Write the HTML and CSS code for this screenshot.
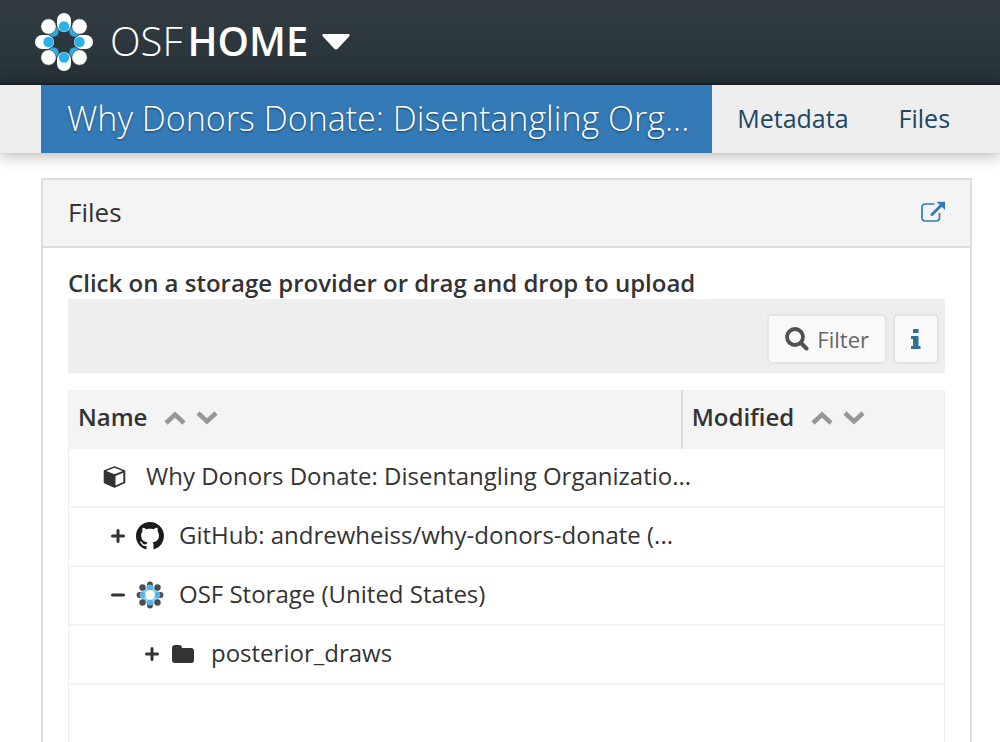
FILE: index.html
```html
<!DOCTYPE html>
<html lang="en">
<head>
<meta charset="utf-8">
<title>OSF | Files</title>
<meta name="viewport" content="width=device-width, initial-scale=1">
<link rel="stylesheet" href="styles.css">
</head>
<body>
<header class="topbar">
  <a class="brand" href="#">
    <svg class="brand-logo" viewBox="-30 -30 60 60" aria-hidden="true">
      <g fill="#fff"><rect x="-7" y="-29" width="14" height="19" rx="7"/><rect x="-7" y="10" width="14" height="19" rx="7"/><rect x="-29" y="-7" width="19" height="14" rx="7"/><rect x="10" y="-7" width="19" height="14" rx="7"/></g>
      <g fill="#2bace2" stroke="#2c363b" stroke-width=".6"><circle cx="10.500" cy="10.500" r="5.500"/><circle cx="-10.500" cy="10.500" r="5.500"/><circle cx="10.500" cy="-10.500" r="5.500"/><circle cx="-10.500" cy="-10.500" r="5.500"/></g>
      <g fill="#fff" stroke="#2c363b" stroke-width=".6"><circle cx="15.500" cy="15.500" r="7.700"/><circle cx="-15.500" cy="15.500" r="7.700"/><circle cx="15.500" cy="-15.500" r="7.700"/><circle cx="-15.500" cy="-15.500" r="7.700"/></g>
      <g fill="#2bb0ea"><circle cy="-15.500" r="5.200"/><circle cy="15.500" r="5.200"/><circle cx="-15.500" r="5.200"/><circle cx="15.500" r="5.200"/></g>
    </svg>
    <span class="brand-name">OSF<b>HOME</b></span>
  </a>
  <button class="brand-menu" type="button" aria-label="Switch service">
    <svg class="caret" viewBox="0 0 28 16" aria-hidden="true"><path d="M1.500 0h25q2 .5.500 2.500L16 14.500q-2 1.800-4 0L1 2.500Q-.5.500 1.500 0z" fill="#fff"/></svg>
  </button>
</header>
<nav class="project-nav">
  <a class="project-title" href="#">Why Donors Donate: Disentangling Org...</a>
  <a class="nav-link" href="#">Metadata</a>
  <a class="nav-link" href="#">Files</a>
</nav>
<main class="page">
  <section class="panel">
    <div class="panel-heading">
      <h1 class="panel-title">Files</h1>
      <a class="open-link" href="#" aria-label="Open files page">
        <svg class="icon-open" viewBox="0 0 24 22" aria-hidden="true"><path d="M13.500 3H4.500Q1 3 1 6.500v10Q1 20 4.500 20h10.500q3.500 0 3.500-3.500V12" fill="none" stroke="#337ab7" stroke-width="1.700"/><path d="M11 13.500L20 4.500" stroke="#337ab7" stroke-width="3" stroke-linecap="round"/><path d="M15.500.8H24V9z" fill="#337ab7"/></svg>
      </a>
    </div>
    <div class="panel-body">
      <p class="hint">Click on a storage provider or drag and drop to upload</p>
      <div class="toolbar">
        <button class="tool" type="button">
          <svg class="icon-search" viewBox="0 0 24 24" aria-hidden="true"><circle cx="10" cy="10" r="8" fill="none" stroke="#505050" stroke-width="3.800"/><path d="M16 16l5.500 5.500" stroke="#505050" stroke-width="4" stroke-linecap="round"/></svg>
          <span>Filter</span>
        </button>
        <button class="tool tool-info" type="button" aria-label="Information">
          <svg class="icon-info" viewBox="0 0 10 20" aria-hidden="true"><path d="M2.500 0h4.500q.5 0 .5.500v3q0 .5-.5.500H2.500Q2 4 2 3.500v-3Q2 0 2.500 0zM.5 7H7q.5 0 .5.500V17H9q.5 0 .5.500v2q0 .5-.5.500H.5Q0 20 0 19.500v-2Q0 17 .5 17H2v-7H.5Q0 10 0 9.500v-2Q0 7 .5 7z" fill="#31708f"/></svg>
        </button>
      </div>
      <table class="files">
        <colgroup><col class="col-name"><col></colgroup>
        <thead>
          <tr>
            <th scope="col"><div class="head">Name
              <span class="sorts">
                <button class="sort" type="button" aria-label="Sort by name ascending"><svg class="chevron" viewBox="0 0 22 14" aria-hidden="true"><path d="M2 12L11 3.500l9 8.500" fill="none" stroke="#979797" stroke-width="4.500"/></svg></button>
                <button class="sort" type="button" aria-label="Sort by name descending"><svg class="chevron" viewBox="0 0 22 14" aria-hidden="true"><path d="M2 2l9 8.500L20 2" fill="none" stroke="#979797" stroke-width="4.500"/></svg></button>
              </span></div></th>
            <th scope="col"><div class="head">Modified
              <span class="sorts">
                <button class="sort" type="button" aria-label="Sort by modified ascending"><svg class="chevron" viewBox="0 0 22 14" aria-hidden="true"><path d="M2 12L11 3.500l9 8.500" fill="none" stroke="#979797" stroke-width="4.500"/></svg></button>
                <button class="sort" type="button" aria-label="Sort by modified descending"><svg class="chevron" viewBox="0 0 22 14" aria-hidden="true"><path d="M2 2l9 8.500L20 2" fill="none" stroke="#979797" stroke-width="4.500"/></svg></button>
              </span></div></th>
          </tr>
        </thead>
        <tbody>
          <tr>
            <td><div class="item level-0">
              <svg class="icon-cube" viewBox="0 0 22 22" aria-hidden="true"><path d="M11 1L21 5v11.500L11 21 1 16.500V5z" fill="#333" stroke="#333" stroke-width="1.600" stroke-linejoin="round"/><path d="M11 1.800L19.200 5 11 8.300 2.800 5zM12 10l7.800-3.200v9.100L12 19.400z" fill="#fff"/></svg>
              <span>Why Donors Donate: Disentangling Organizatio...</span></div></td>
            <td></td>
          </tr>
          <tr>
            <td><div class="item level-1">
              <button class="toggle" type="button" aria-label="Expand GitHub"><svg class="sign" viewBox="0 0 14 14" aria-hidden="true"><path d="M7 1.500v11M1.500 7h11" stroke="#333" stroke-width="3" stroke-linecap="round"/></svg></button>
              <svg class="icon-provider" viewBox="0 0 16 16" aria-hidden="true"><path fill="#1b1b1b" d="M8 0C3.580 0 0 3.580 0 8c0 3.540 2.290 6.530 5.470 7.590.4.070.55-.17.55-.38 0-.19-.01-.82-.01-1.490-2.010.37-2.530-.49-2.690-.94-.09-.23-.48-.94-.82-1.130-.28-.15-.68-.52-.01-.53.63-.01 1.080.58 1.230.82.72 1.210 1.870.87 2.330.66.070-.52.28-.87.51-1.070-1.780-.2-3.640-.89-3.640-3.950 0-.87.31-1.590.82-2.150-.08-.2-.36-1.020.08-2.120 0 0 .67-.21 2.200.82.64-.18 1.320-.27 2-.27s1.360.09 2 .27c1.530-1.040 2.200-.82 2.200-.82.44 1.100.16 1.920.08 2.120.51.56.82 1.270.82 2.150 0 3.070-1.870 3.750-3.650 3.950.29.25.54.73.54 1.480 0 1.070-.01 1.930-.01 2.200 0 .21.15.46.55.38A8.010 8.010 0 0 0 16 8c0-4.420-3.580-8-8-8z"/></svg>
              <span>GitHub: andrewheiss/why-donors-donate (...</span></div></td>
            <td></td>
          </tr>
          <tr>
            <td><div class="item level-1">
              <button class="toggle" type="button" aria-label="Collapse OSF Storage"><svg class="sign" viewBox="0 0 14 14" aria-hidden="true"><path d="M1.500 7h11" stroke="#333" stroke-width="3" stroke-linecap="round"/></svg></button>
              <svg class="icon-provider" viewBox="-14 -14 28 28" aria-hidden="true">
                <circle r="7" fill="none" stroke="#8fd2f2" stroke-width="5"/>
                <g fill="#4c4c50"><circle cy="-10.500" r="2.900"/><circle cy="10.500" r="2.900"/><circle cx="-10.500" r="2.900"/><circle cx="10.500" r="2.900"/><circle cx="7.500" cy="7.500" r="3.200"/><circle cx="-7.500" cy="7.500" r="3.200"/><circle cx="7.500" cy="-7.500" r="3.200"/><circle cx="-7.500" cy="-7.500" r="3.200"/></g>
                <g fill="#55b4e4"><circle cy="-7.500" r="2.900"/><circle cy="7.500" r="2.900"/><circle cx="-7.500" r="2.900"/><circle cx="7.500" r="2.900"/></g>
                <circle r="4.800" fill="#fff"/>
              </svg>
              <span>OSF Storage (United States)</span></div></td>
            <td></td>
          </tr>
          <tr>
            <td><div class="item level-2">
              <button class="toggle" type="button" aria-label="Expand posterior_draws"><svg class="sign" viewBox="0 0 14 14" aria-hidden="true"><path d="M7 1.500v11M1.500 7h11" stroke="#333" stroke-width="3" stroke-linecap="round"/></svg></button>
              <svg class="icon-folder" viewBox="0 0 22 18" aria-hidden="true"><path d="M3 0h4q3 0 3 3h9q3 0 3 3v9q0 3-3 3H3q-3 0-3-3V3q0-3 3-3z" fill="#333"/></svg>
              <span>posterior_draws</span></div></td>
            <td></td>
          </tr>
        </tbody>
      </table>
    </div>
  </section>
</main>
</body>
</html>
```
FILE: styles.css
```css
* { box-sizing: border-box; }
html, body { height: 100%; }
body {
  display: flex;
  flex-direction: column;
  margin: 0;
  overflow: hidden;
  background: #fff;
  color: #333;
  font: 24px/34px "Open Sans", "Noto Sans", sans-serif;
}
a { text-decoration: none; }
button {
  margin: 0;
  padding: 0;
  border: 0;
  background: none;
  color: inherit;
  font: inherit;
}
svg { display: block; flex: none; }

.topbar {
  display: flex;
  flex: none;
  align-items: center;
  gap: 14px;
  padding: 12px 34px 11px;
  border-bottom: 2px solid #1a252d;
  background: linear-gradient(#333c43, #263238);
}
.brand { display: flex; align-items: center; gap: 16px; color: #fff; }
.brand-logo { width: 60px; height: 60px; }
.brand-name { padding-bottom: 2px; font-size: 40px; line-height: 56px; font-weight: 300; }
.brand-name b { margin-left: 5px; font-weight: 600; }
.caret { width: 28px; height: 16px; }

.project-nav {
  display: flex;
  flex: none;
  padding-left: 41px;
  background: #eee;
  box-shadow: 0 1px 16px rgba(0, 0, 0, 0.35);
}
.project-title {
  padding: 9px 23px 11px 26px;
  background: #337ab7;
  color: #fff;
  font-size: 34px;
  font-weight: 300;
  line-height: 48px;
  text-shadow: 0 1px 2px rgba(0, 0, 0, 0.5);
  white-space: nowrap;
}
.nav-link { padding: 16px 25px 18px; color: #214661; font-size: 25px; }

.page { display: flex; flex: 1; padding: 25px 28px 0 41px; }
.panel {
  display: flex;
  flex: 1;
  flex-direction: column;
  border: 2px solid #ddd;
  border-bottom: 0;
}
.panel-heading {
  display: flex;
  align-items: center;
  justify-content: space-between;
  padding: 15px 25px 17px;
  border-bottom: 2px solid #ddd;
  background: #f4f4f4;
}
.panel-title { margin: 0; font-size: 26px; font-weight: 400; line-height: 34px; }
.icon-open { width: 24px; height: 22px; }
.panel-body { display: flex; flex: 1; flex-direction: column; padding: 19px 25px 0; }
.hint { margin: 0; font-weight: 600; line-height: 32px; }

.toolbar {
  display: flex;
  justify-content: flex-end;
  gap: 6px;
  margin-bottom: 17px;
  padding: 15px 6px 9px;
  background: #eee;
}
.tool {
  display: flex;
  align-items: center;
  gap: 8px;
  height: 50px;
  padding: 0 16px;
  border: 2px solid #e4e4e4;
  border-radius: 5px;
  background: #f9f9f9;
  color: #666;
  font-size: 22px;
}
.icon-search { width: 24px; height: 24px; }
.icon-info { width: 10px; height: 20px; }

.files { width: 100%; border-collapse: collapse; table-layout: fixed; }
.panel-body::after { flex: 1; border: solid #eee; border-width: 0 1px; content: ""; }
.col-name { width: 70%; }
.files th, .files td { padding: 0; border: 1px solid #eee; text-align: left; }
.files th { height: 57px; background: #f4f4f4; font-weight: 600; }
.files th + th { border-left: 2px solid #ddd; }
.files td { height: 59px; border-color: #f2f2f2; border-width: 2px 0; }
.files td:first-child { border-left: 1px solid #eee; }
.files td:last-child { border-right: 1px solid #eee; }
.head { display: flex; align-items: center; gap: 17px; padding: 0 9px 3px; }
.sorts { display: flex; gap: 10px; padding-top: 2px; }
.chevron { width: 22px; height: 14px; }
.item { display: flex; align-items: center; padding-bottom: 2px; white-space: nowrap; }
.item svg { margin-top: 1px; }
.level-0 { gap: 20px; padding-left: 34px; }
.level-1 { gap: 15px; padding-left: 42px; }
.level-1 .toggle, .level-2 .toggle { margin-right: -4px; }
.level-2 { gap: 17px; padding-left: 76px; }
.icon-cube { width: 23px; height: 22px; }
.icon-provider { width: 28px; height: 28px; }
.icon-folder { width: 22px; height: 18px; }
.sign { width: 14px; height: 14px; }
```
